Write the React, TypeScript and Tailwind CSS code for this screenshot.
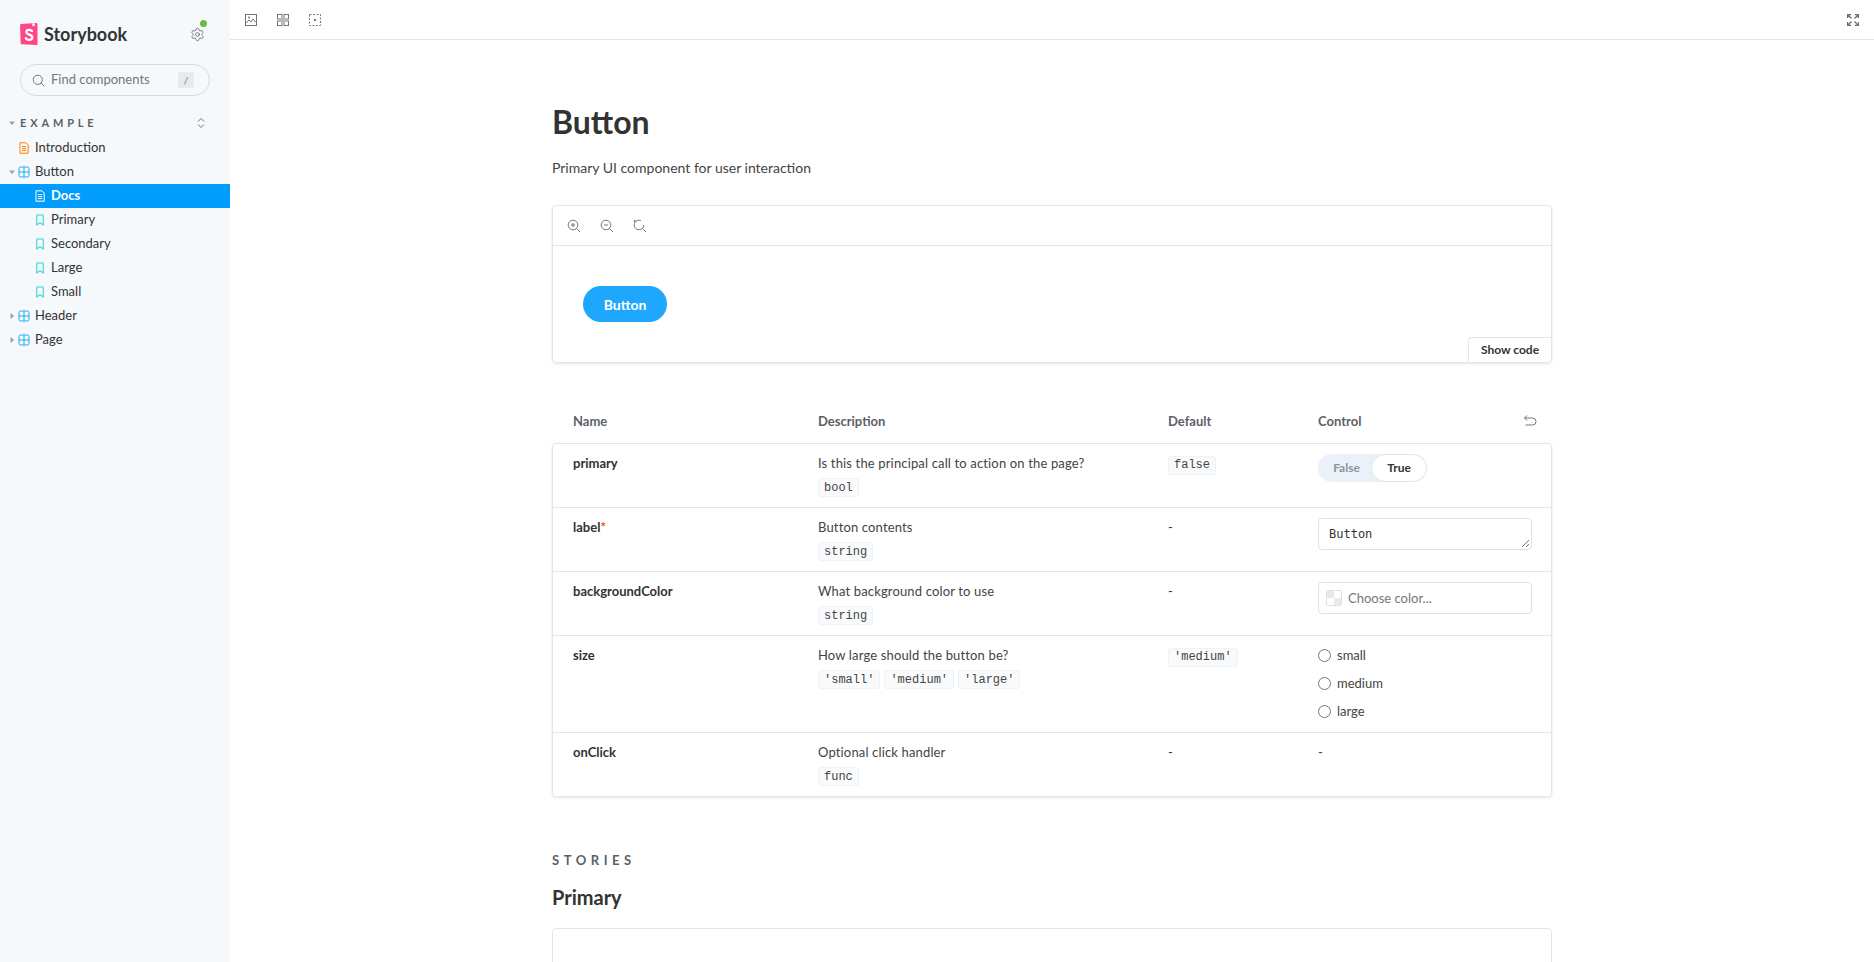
import React from 'react';
import { Settings } from 'lucide-react';

const Chevron = ({ open }: { open?: boolean }) => (
  <svg width="8" height="8" viewBox="0 0 8 8" className="shrink-0">
    {open ? <path d="M1 2.5h6L4 6z" fill="#9a9fa6" /> : <path d="M2.5 1v6L6 4z" fill="#9a9fa6" />}
  </svg>
);

const ComponentIcon = () => (
  <svg width="12" height="12" viewBox="0 0 12 12" fill="none" className="shrink-0">
    <rect x="1" y="1" width="10" height="10" rx="1.5" stroke="#1EA7FD" strokeWidth="1" />
    <path d="M6 1v10M1 6h10" stroke="#1EA7FD" strokeWidth="1" />
  </svg>
);

const DocIcon = ({ color }: { color: string }) => (
  <svg width="12" height="12" viewBox="0 0 12 12" fill="none" className="shrink-0">
    <path d="M2 .8h6L10.2 3v8.2H2z" stroke={color} strokeWidth="1" strokeLinejoin="round" />
    <path d="M4 4.5h4.2M4 6.5h4.2M4 8.5h4.2" stroke={color} strokeWidth="1" />
  </svg>
);

const StoryIcon = () => (
  <svg width="12" height="12" viewBox="0 0 12 12" fill="none" className="shrink-0">
    <path d="M2.7 1h6.6v10L6 8.6 2.7 11z" stroke="#37D5D3" strokeWidth="1.1" strokeLinejoin="round" />
  </svg>
);

const Logo = () => (
  <svg width="18" height="22" viewBox="0 0 18 22" className="shrink-0">
    <path d="M.7 20.3 0 2.2C0 1.6.4 1.1 1 1L16.4.1c.6 0 1.1.4 1.1 1V20.9c0 .6-.5 1.1-1.1 1.1h-.1L1.7 21.3c-.5 0-1-.5-1-1z" fill="#FF4785" />
    <path d="M12.4 3.6 12.3.5l2.4-.2.1 3.3-1.2-.9z" fill="#fff" />
    <path d="M12 9c0-1.5-1.1-2.2-2.8-2.2-1.8 0-2.9.9-2.9 2.3 0 3.2 6 1.9 6 5.2 0 1.7-1.4 2.6-3.3 2.6-1.8 0-3.2-.8-3.2-2.7" fill="none" stroke="#fff" strokeWidth="2.2" />
  </svg>
);

const Row = ({ children, indent, active }: { children: React.ReactNode; indent: string; active?: boolean }) => (
  <div className={`flex h-6 items-center text-[13px] ${indent} ${active ? 'bg-[#029CFD] font-bold text-white' : 'text-[#333333]'}`}>
    {children}
  </div>
);

const Sidebar = () => (
  <aside className="flex h-full w-[230px] shrink-0 flex-col bg-[#F6F9FC]">
    <div className="flex items-center pl-5 pr-[26px] pt-[23px]">
      <Logo />
      <span className="ml-[6px] flex-1 text-[18px] leading-[22px] font-bold text-[#333333]">Storybook</span>
      <div className="relative h-[14px] w-[14px]">
        <Settings size={15} strokeWidth={1.2} color="#555a60" />
        <span className="absolute top-[-7px] right-[-3px] h-[7px] w-[7px] rounded-full bg-[#66BF3C]" />
      </div>
    </div>
    <div className="mx-5 mt-[19px] flex h-8 items-center rounded-full border border-[#D3DCE6] pl-[11px] pr-[15px]">
      <svg width="13" height="13" viewBox="0 0 13 13" fill="none" className="shrink-0">
        <circle cx="5.8" cy="5.8" r="4.6" stroke="#73777d" />
        <path d="m9.2 9.2 3 3" stroke="#73777d" />
      </svg>
      <span className="ml-[6px] flex-1 text-[13px] text-[#73777d]">Find components</span>
      <span className="flex h-4 w-4 items-center justify-center rounded-[2px] bg-[#E8EBEE] text-[10px] text-[#73777d]">/</span>
    </div>
    <div className="mt-[17px] flex h-5 items-center pl-[8px] pr-[24px]">
      <Chevron open />
      <span className="ml-1 flex-1 text-[11px] font-bold tracking-[0.35em] text-[#5C6168]">EXAMPLE</span>
      <svg width="10" height="12" viewBox="0 0 10 12" fill="none">
        <path d="m2 4.5 3-3 3 3M2 7.5l3 3 3-3" stroke="#73777d" strokeWidth="1" />
      </svg>
    </div>
    <div className="mt-[3px]">
      <Row indent="pl-[18px]"><DocIcon color="#FF8300" /><span className="ml-[5px]">Introduction</span></Row>
      <Row indent="pl-[8px]"><Chevron open /><span className="w-[2px]" /><ComponentIcon /><span className="ml-[5px]">Button</span></Row>
      <Row indent="pl-[34px]" active><DocIcon color="#ffffff" /><span className="ml-[5px]">Docs</span></Row>
      {['Primary', 'Secondary', 'Large', 'Small'].map((name) => (
        <Row key={name} indent="pl-[34px]"><StoryIcon /><span className="ml-[5px]">{name}</span></Row>
      ))}
      <Row indent="pl-[8px]"><Chevron /><span className="w-[2px]" /><ComponentIcon /><span className="ml-[5px]">Header</span></Row>
      <Row indent="pl-[8px]"><Chevron /><span className="w-[2px]" /><ComponentIcon /><span className="ml-[5px]">Page</span></Row>
    </div>
  </aside>
);

const Toolbar = () => (
  <div className="flex h-10 shrink-0 items-center gap-5 border-b border-[#E3E6E8] pl-[15px] pr-[15px]">
    <svg width="12" height="12" viewBox="0 0 12 12" fill="none">
      <rect x=".5" y=".5" width="11" height="11" stroke="#73777d" />
      <path d="m1 9 3-3 2 2 2-3 3 3.5" stroke="#73777d" />
      <circle cx="4" cy="3.5" r="1" fill="#73777d" />
    </svg>
    <svg width="12" height="12" viewBox="0 0 12 12" fill="none">
      <rect x=".5" y=".5" width="4.5" height="4.5" stroke="#73777d" />
      <rect x="7" y=".5" width="4.5" height="4.5" stroke="#73777d" />
      <rect x=".5" y="7" width="4.5" height="4.5" stroke="#73777d" />
      <rect x="7" y="7" width="4.5" height="4.5" stroke="#73777d" />
      <rect x="4" y="4" width="4" height="4" fill="#b8bcc1" />
    </svg>
    <svg width="12" height="12" viewBox="0 0 12 12" fill="none">
      <rect x=".5" y=".5" width="11" height="11" stroke="#73777d" strokeDasharray="2 1.5" />
      <rect x="5" y="5" width="2" height="2" fill="#73777d" />
    </svg>
    <div className="flex-1" />
    <svg width="12" height="12" viewBox="0 0 12 12" fill="none">
      <path d="M.6 4V.6H4M.6.6l3.9 3.9M8 .6h3.4V4M11.4.6 7.5 4.5M.6 8v3.4H4M.6 11.4l3.9-3.9M8 11.4h3.4V8M11.4 11.4 7.5 7.5" stroke="#6a6f75" strokeWidth="1.3" />
    </svg>
  </div>
);

const Code = ({ children }: { children: React.ReactNode }) => (
  <span className="inline-flex h-[19px] items-center rounded-[3px] border border-[#EEF3F8] bg-[#F8FAFC] px-[5px] font-['Liberation_Mono',monospace] text-[12px] text-[#444444]">
    {children}
  </span>
);

const PropRow = ({
  name,
  required,
  desc,
  types,
  def,
  children,
  last,
}: {
  name: string;
  required?: boolean;
  desc: string;
  types: string[];
  def: React.ReactNode;
  children: React.ReactNode;
  last?: boolean;
}) => (
  <div className={`grid grid-cols-[265px_350px_150px_1fr] ${last ? '' : 'border-b border-[#E3E6E8]'}`}>
    <div className="pt-[9px] pb-[10px] pl-5 text-[13px] font-bold leading-5 text-[#333333]">
      {name}
      {required && <span className="text-[#FF4400]">*</span>}
    </div>
    <div className="pt-[9px] pb-[10px] text-[13px] leading-5 tracking-[0.15px] text-[#444444]">
      <div>{desc}</div>
      <div className="mt-[5px] flex h-[19px] gap-1 tracking-normal">
        {types.map((t) => (
          <Code key={t}>{t}</Code>
        ))}
      </div>
    </div>
    <div className="pt-[9px] text-[13px] leading-5 text-[#333333]">{def}</div>
    <div className="pt-[10px] pr-5 text-[13px] leading-5 text-[#444444]">{children}</div>
  </div>
);

const ZoomIcon = ({ kind }: { kind: 'in' | 'out' | 'reset' }) => (
  <svg width="14" height="14" viewBox="0 0 14 14" fill="none">
    <circle cx="6" cy="6" r="4.8" stroke="#73777d" strokeDasharray={kind === 'reset' ? '24 6' : undefined} />
    <path d="m9.5 9.5 3.5 3.5" stroke="#73777d" />
    {kind !== 'reset' && <path d="M3.8 6h4.4" stroke="#73777d" />}
    {kind === 'in' && <path d="M6 3.8v4.4" stroke="#73777d" />}
    {kind === 'reset' && <circle cx="1.7" cy="2" r="1" fill="#73777d" />}
  </svg>
);

const Radio = ({ label }: { label: string }) => (
  <div className="flex h-7 items-center">
    <span className="h-[13px] w-[13px] rounded-full border border-[#767676]" />
    <span className="ml-[6px] text-[13px]">{label}</span>
  </div>
);

const Docs = () => (
  <div className="mx-auto w-[1000px] pt-[60px]">
    <h1 className="text-[32px] leading-[44px] font-bold text-[#333333]">Button</h1>
    <p className="mt-[12px] text-[14px] leading-[24px] text-[#444444]">Primary UI component for user interaction</p>

    <div className="relative mt-[25px] h-[158px] rounded-[4px] border border-[#E3E6E8] shadow-[0_1px_3px_rgba(0,0,0,0.1)]">
      <div className="flex h-10 items-center gap-[19px] border-b border-[#E3E6E8] pl-[14px]">
        <ZoomIcon kind="in" />
        <ZoomIcon kind="out" />
        <ZoomIcon kind="reset" />
      </div>
      <div className="pl-[30px] pt-[40px]">
        <button className="flex h-9 w-[84px] items-center justify-center rounded-full bg-[#1EA7FD] text-[14px] font-bold text-white">
          Button
        </button>
      </div>
      <div className="absolute right-0 bottom-0 flex h-[25px] w-[83px] items-center justify-center rounded-tl-[4px] border-t border-l border-[#E3E6E8] text-[12px] font-bold text-[#333333]">
        Show code
      </div>
    </div>

    <div className="mt-[48px] grid h-[32px] grid-cols-[266px_350px_150px_1fr] text-[13px] font-bold leading-5 text-[#5C6168]">
      <div className="pl-[21px]">Name</div>
      <div>Description</div>
      <div>Default</div>
      <div className="flex justify-between pr-[15px]">
        <span>Control</span>
        <svg width="14" height="14" viewBox="0 0 14 14" fill="none" className="mt-[3px]">
          <path d="M4 1.5 1.5 4 4 6.5M1.500 4h8a3.500 3.500 0 0 1 0 7H2.500" stroke="#73777d" />
        </svg>
      </div>
    </div>

    <div className="rounded-[4px] border border-[#E3E6E8] shadow-[0_1px_3px_rgba(0,0,0,0.1)]">
      <PropRow
        name="primary"
        desc="Is this the principal call to action on the page?"
        types={['bool']}
        def={<Code>false</Code>}
      >
        <div className="flex h-7 w-[109px] items-center rounded-full bg-[#EAF1F8] text-[12px] font-bold">
          <span className="w-[53px] pl-1 text-center text-[#8E9399]">False</span>
          <span className="flex h-7 w-[56px] items-center justify-center rounded-full border border-[#E3E6E8] bg-white text-[#333333]">True</span>
        </div>
      </PropRow>
      <PropRow name="label" required desc="Button contents" types={['string']} def="-">
        <div className="relative h-8 w-[214px] rounded-[4px] border border-[#DDE1E5] pl-[10px] font-['DejaVu_Sans_Mono',monospace] text-[12px] leading-[30px] text-[#333333]">
          Button
          <svg width="9" height="9" viewBox="0 0 9 9" className="absolute right-[1px] bottom-[1px]">
            <path d="M1 8 8 1M5 8l3-3" stroke="#555" strokeWidth=".8" />
          </svg>
        </div>
      </PropRow>
      <PropRow name="backgroundColor" desc="What background color to use" types={['string']} def="-">
        <div className="flex h-8 w-[214px] items-center rounded-[4px] border border-[#DDE1E5] pl-[7px] text-[#73777d]">
          <span className="grid h-4 w-4 grid-cols-2 overflow-hidden rounded-[2px] border border-[#DDE1E5]">
            <span className="bg-[#E9E9E9]" />
            <span className="bg-white" />
            <span className="bg-white" />
            <span className="bg-[#E9E9E9]" />
          </span>
          <span className="ml-[6px]">Choose color...</span>
        </div>
      </PropRow>
      <PropRow name="size" desc="How large should the button be?" types={["'small'", "'medium'", "'large'"]} def={<Code>'medium'</Code>}>
        <div className="mt-[-5px] mb-[7px]">
          <Radio label="small" />
          <Radio label="medium" />
          <Radio label="large" />
        </div>
      </PropRow>
      <PropRow name="onClick" desc="Optional click handler" types={['func']} def="-" last>
        <div className="mt-[-1px]">-</div>
      </PropRow>
    </div>

    <div className="mt-[53px] text-[13px] leading-5 font-bold tracking-[0.35em] text-[#5C6168]">STORIES</div>
    <h2 className="mt-[13px] text-[20px] leading-[28px] font-bold text-[#333333]">Primary</h2>
    <div className="mt-[17px] h-[100px] rounded-[4px] border border-[#E3E6E8]" />
  </div>
);

export default function App() {
  return (
    <div className="flex h-[962px] overflow-hidden bg-white font-['Lato','Noto_Sans',sans-serif]">
      <Sidebar />
      <main className="flex min-w-0 flex-1 flex-col">
        <Toolbar />
        <div className="min-h-0 flex-1 overflow-hidden">
          <Docs />
        </div>
      </main>
    </div>
  );
}
